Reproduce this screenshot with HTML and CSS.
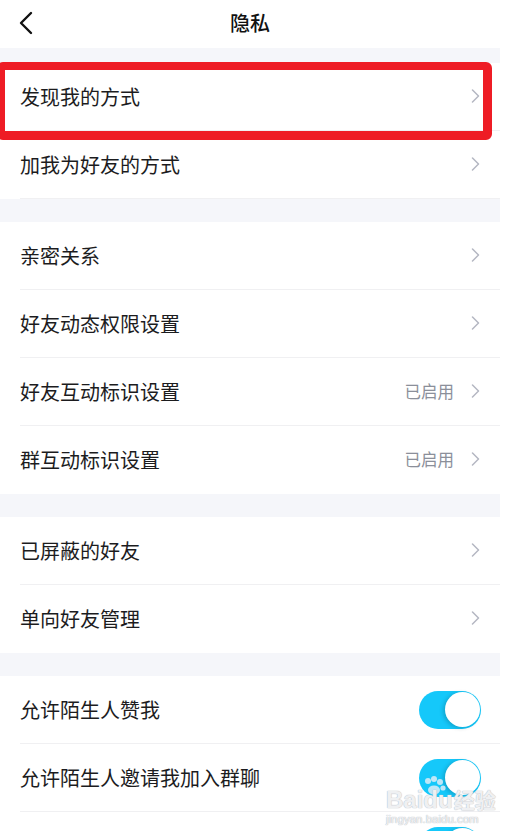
FILE: index.html
```html
<!DOCTYPE html>
<html>
<head>
    <title>隐私</title>
    <link rel="stylesheet" href="styles.css">
</head>
<body>

<div class="page">
    <div class="header">
        <svg class="back" width="14" height="24" viewBox="0 0 14 24"><path d="M12 2 L2 12 L12 22" fill="none" stroke="#111" stroke-width="2.4" stroke-linecap="round" stroke-linejoin="round"/></svg>
        <div class="title">隐私</div>
        <div></div>
    </div>

    <div class="gap gap-first"></div>
    <div class="group">
        <div class="row"><div class="row-body"><span class="label">发现我的方式</span><svg class="arrow" width="9" height="14" viewBox="0 0 9 14"><path d="M1.5 1 L7.5 7 L1.5 13" fill="none" stroke="#b4b7c2" stroke-width="1.5" stroke-linejoin="round" stroke-linecap="round"/></svg></div></div>
        <div class="row"><div class="row-body"><span class="label">加我为好友的方式</span><svg class="arrow" width="9" height="14" viewBox="0 0 9 14"><path d="M1.5 1 L7.5 7 L1.5 13" fill="none" stroke="#b4b7c2" stroke-width="1.5" stroke-linejoin="round" stroke-linecap="round"/></svg></div></div>
        <div class="highlight"></div>
    </div>

    <div class="gap"></div>
    <div class="group">
        <div class="row"><div class="row-body"><span class="label">亲密关系</span><svg class="arrow" width="9" height="14" viewBox="0 0 9 14"><path d="M1.5 1 L7.5 7 L1.5 13" fill="none" stroke="#b4b7c2" stroke-width="1.5" stroke-linejoin="round" stroke-linecap="round"/></svg></div></div>
        <div class="row"><div class="row-body"><span class="label">好友动态权限设置</span><svg class="arrow" width="9" height="14" viewBox="0 0 9 14"><path d="M1.5 1 L7.5 7 L1.5 13" fill="none" stroke="#b4b7c2" stroke-width="1.5" stroke-linejoin="round" stroke-linecap="round"/></svg></div></div>
        <div class="row"><div class="row-body"><span class="label">好友互动标识设置</span><span class="value">已启用</span><svg class="arrow" width="9" height="14" viewBox="0 0 9 14"><path d="M1.5 1 L7.5 7 L1.5 13" fill="none" stroke="#b4b7c2" stroke-width="1.5" stroke-linejoin="round" stroke-linecap="round"/></svg></div></div>
        <div class="row"><div class="row-body"><span class="label">群互动标识设置</span><span class="value">已启用</span><svg class="arrow" width="9" height="14" viewBox="0 0 9 14"><path d="M1.5 1 L7.5 7 L1.5 13" fill="none" stroke="#b4b7c2" stroke-width="1.5" stroke-linejoin="round" stroke-linecap="round"/></svg></div></div>
    </div>

    <div class="gap"></div>
    <div class="group">
        <div class="row"><div class="row-body"><span class="label">已屏蔽的好友</span><svg class="arrow" width="9" height="14" viewBox="0 0 9 14"><path d="M1.5 1 L7.5 7 L1.5 13" fill="none" stroke="#b4b7c2" stroke-width="1.5" stroke-linejoin="round" stroke-linecap="round"/></svg></div></div>
        <div class="row"><div class="row-body"><span class="label">单向好友管理</span><svg class="arrow" width="9" height="14" viewBox="0 0 9 14"><path d="M1.5 1 L7.5 7 L1.5 13" fill="none" stroke="#b4b7c2" stroke-width="1.5" stroke-linejoin="round" stroke-linecap="round"/></svg></div></div>
    </div>

    <div class="gap"></div>
    <div class="group">
        <div class="row"><div class="row-body"><span class="label">允许陌生人赞我</span><span class="switch"><span class="knob"></span></span></div></div>
        <div class="row"><div class="row-body"><span class="label">允许陌生人邀请我加入群聊</span><span class="switch"><span class="knob"></span></span></div></div>
        <div class="row"><div class="row-body"><span class="label"></span><span class="switch"><span class="knob"></span></span></div></div>
        <div class="watermark">
            <svg class="paw" width="22" height="20" viewBox="0 0 22 20">
                <circle cx="4" cy="5" r="3" fill="#bfe7f7"/>
                <circle cx="10" cy="3" r="3" fill="#bfe7f7"/>
                <circle cx="16" cy="6" r="3" fill="#bfe7f7"/>
                <circle cx="19" cy="12" r="2.6" fill="#bfe7f7"/>
                <ellipse cx="10" cy="14" rx="6" ry="4.5" fill="#bfe7f7"/>
            </svg>
            <div class="wm-main">Baidu<span class="wm-cn">经验</span></div>
            <div class="wm-url">jingyan.baidu.com</div>
        </div>
    </div>
</div>

</body>
</html>
```

FILE: styles.css
```css
body {
    margin: 0;
    background-color: white;
    font-family: "Noto Sans CJK SC", "Noto Sans", sans-serif;
    color: #1c1c1e;
    overflow: hidden;
}
.page {
    width: 500px;
    height: 831px;
    overflow: hidden;
}
.header {
    height: 48px;
    display: grid;
    grid-template-columns: 1fr auto 1fr;
    align-items: center;
}
.back {
    margin-left: 19px;
    margin-top: -2px;
}
.title {
    font-size: 20px;
    font-weight: 500;
    color: #111;
    margin-top: -3px;
}
.gap {
    height: 23px;
    background-color: #f5f6fa;
}
.gap-first {
    height: 15px;
}
.group {
    position: relative;
}
.row {
    height: 68px;
    padding-left: 20px;
}
.row-body {
    height: 100%;
    display: flex;
    align-items: center;
    padding-right: 20px;
    border-bottom: 1px solid #f0f0f2;
    box-sizing: border-box;
}
.row:last-of-type .row-body {
    border-bottom: none;
}
.label {
    flex: 1;
    font-size: 20px;
    margin-top: -1px;
}
.value {
    font-size: 16.5px;
    color: #8b8f9a;
    margin-right: 17px;
    margin-top: -2px;
}
.arrow {
    margin-top: -2px;
}
.switch {
    width: 62px;
    height: 38px;
    border-radius: 19px;
    background-color: #15c8fa;
    position: relative;
    margin-right: -1px;
}
.knob {
    position: absolute;
    right: 1.5px;
    top: 1.5px;
    width: 35px;
    height: 35px;
    border-radius: 50%;
    background-color: white;
    box-shadow: -2px 1px 4px rgba(0,0,0,0.18);
}
.highlight {
    position: absolute;
    left: -3px;
    top: -1px;
    width: 495px;
    height: 78px;
    box-sizing: border-box;
    border: 8px solid #ee1c25;
    border-bottom-width: 9px;
    border-right-width: 9px;
    border-radius: 6px;
}
.watermark {
    position: absolute;
    left: 386px;
    top: 112px;
    color: rgba(255,255,255,0.8);
    text-shadow: 0 0 1px #b8bcc4, 0 0 1px #b8bcc4;
    font-family: "Liberation Sans", sans-serif;
    line-height: 1;
}
.paw {
    position: absolute;
    left: 38px;
    top: -12px;
}
.wm-main {
    position: relative;
    font-size: 24px;
    font-weight: bold;
}
.wm-cn {
    font-family: "Noto Sans CJK SC", sans-serif;
    font-size: 21px;
    margin-left: 1px;
}
.wm-url {
    font-size: 11.5px;
    margin-top: 2px;
}
```
